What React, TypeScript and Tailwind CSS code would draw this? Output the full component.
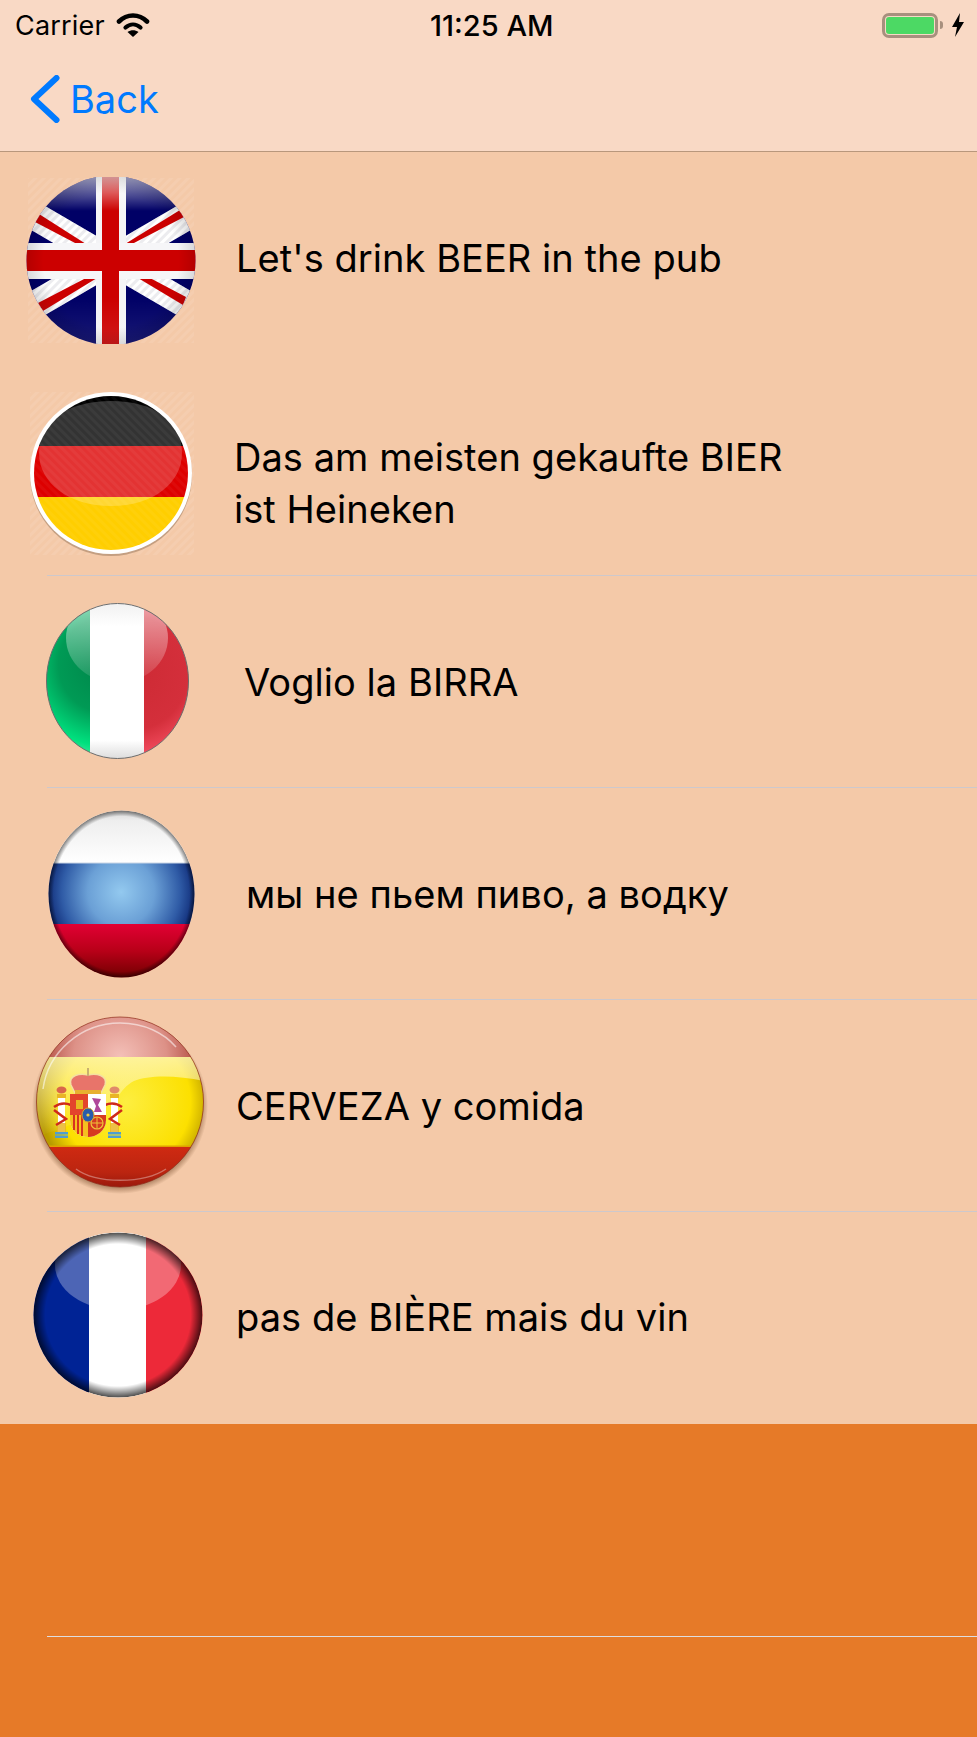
import type { ReactNode } from "react";

function Hatch({ id, w, h }: { id: string; w: number; h: number }) {
  return (
    <>
      <defs>
        <pattern id={id} width="6" height="6" patternUnits="userSpaceOnUse" patternTransform="rotate(45)">
          <rect width="3" height="6" fill="#ffffff" opacity="0.08" />
        </pattern>
      </defs>
      <rect x="2" y="1" width={w} height={h} fill={`url(#${id})`} />
    </>
  );
}

function UkFlag() {
  return (
    <svg width="170" height="167" viewBox="0 0 170 167" className="block">
      <defs>
        <clipPath id="uk-clip">
          <circle cx="85" cy="83.5" r="84.5" />
        </clipPath>
        <linearGradient id="uk-gloss" x1="0" y1="0" x2="0" y2="1">
          <stop offset="0" stopColor="#fff" stopOpacity="0.65" />
          <stop offset="1" stopColor="#fff" stopOpacity="0" />
        </linearGradient>
        <linearGradient id="uk-low" x1="0" y1="0" x2="0" y2="1">
          <stop offset="0" stopColor="#fff" stopOpacity="0" />
          <stop offset="1" stopColor="#fff" stopOpacity="0.1" />
        </linearGradient>
        <radialGradient id="uk-edge" cx="0.5" cy="0.5" r="0.5">
          <stop offset="0.8" stopColor="#000" stopOpacity="0" />
          <stop offset="1" stopColor="#000" stopOpacity="0.12" />
        </radialGradient>
        <pattern id="uk-stripe" width="6" height="6" patternUnits="userSpaceOnUse" patternTransform="rotate(45)">
          <rect width="3" height="6" fill="#c8c8d0" opacity="0.35" />
        </pattern>
      </defs>
      <Hatch id="uk-hatch" w={166} h={165} />
      <g clipPath="url(#uk-clip)">
        <rect width="170" height="167" fill="#000066" />
        <path d="M85 83.5 L-5 31 M85 83.5 L175 31 M85 83.5 L-5 136 M85 83.5 L175 136" stroke="#ffffff" strokeWidth="28" />
        <path d="M85 83.5 L-5 31 M85 83.5 L175 31 M85 83.5 L-5 136 M85 83.5 L175 136" stroke="url(#uk-stripe)" strokeWidth="28" />
        <polygon points="13,37 9,45 51,67 60,67" fill="#cc0000" />
        <polygon points="154,33 158,40 106,67 99,67" fill="#cc0000" />
        <polygon points="12,126 17,134 71,101 60,101" fill="#cc0000" />
        <polygon points="160,120 157,128 112,101 124,101" fill="#cc0000" />
        <rect x="70" y="0" width="30" height="167" fill="#f4f4f6" />
        <rect x="0" y="66" width="170" height="36" fill="#f6f6f8" />
        <rect x="76" y="0" width="17" height="167" fill="#cc0000" />
        <rect x="0" y="73" width="170" height="21" fill="#cc0000" />
        <rect width="170" height="34" fill="url(#uk-gloss)" />
        <rect y="120" width="170" height="47" fill="url(#uk-low)" />
        <circle cx="85" cy="83.5" r="84.5" fill="url(#uk-edge)" />
      </g>
    </svg>
  );
}

function GermanyFlag() {
  return (
    <svg width="166" height="166" viewBox="0 0 166 166" className="block">
      <defs>
        <clipPath id="de-clip">
          <circle cx="83" cy="82" r="77" />
        </clipPath>
        <pattern id="de-stripe" width="6" height="6" patternUnits="userSpaceOnUse" patternTransform="rotate(-45)">
          <rect width="3" height="6" fill="#ffffff" opacity="0.04" />
        </pattern>
      </defs>
      <Hatch id="de-hatch" w={164} h={163} />
      <circle cx="83" cy="84" r="81" fill="#8a6a50" opacity="0.45" />
      <circle cx="83" cy="82" r="81" fill="#ffffff" />
      <g clipPath="url(#de-clip)">
        <rect y="0" width="166" height="55" fill="#000000" />
        <rect y="55" width="166" height="51" fill="#dd0000" />
        <rect y="106" width="166" height="60" fill="#ffce00" />
        <path d="M11 62 C11 30 40 10 83 10 C126 10 154 30 154 62 C154 92 125 115 83 115 C41 115 11 92 11 62 Z" fill="#ffffff" opacity="0.2" />
        <rect width="166" height="166" fill="url(#de-stripe)" />
      </g>
    </svg>
  );
}

function ItalyFlag() {
  return (
    <svg width="143" height="156" viewBox="0 0 143 156" className="block">
      <defs>
        <clipPath id="it-clip">
          <ellipse cx="71.5" cy="78" rx="71" ry="77.5" />
        </clipPath>
        <radialGradient id="it-green" gradientUnits="userSpaceOnUse" cx="60" cy="62" r="95">
          <stop offset="0" stopColor="#00854a" />
          <stop offset="0.5" stopColor="#009a55" />
          <stop offset="0.85" stopColor="#00e07e" />
          <stop offset="1" stopColor="#45e89f" />
        </radialGradient>
        <radialGradient id="it-red" gradientUnits="userSpaceOnUse" cx="85" cy="70" r="95">
          <stop offset="0" stopColor="#cd2a34" />
          <stop offset="0.6" stopColor="#d42f3b" />
          <stop offset="0.85" stopColor="#f04a5c" />
          <stop offset="1" stopColor="#f07c8a" />
        </radialGradient>
        <linearGradient id="it-gloss" x1="0" y1="0" x2="0" y2="1">
          <stop offset="0" stopColor="#fff" stopOpacity="0.6" />
          <stop offset="1" stopColor="#fff" stopOpacity="0.08" />
        </linearGradient>
        <linearGradient id="it-white" x1="0" y1="0" x2="0" y2="1">
          <stop offset="0" stopColor="#f1f1f1" />
          <stop offset="0.15" stopColor="#ffffff" />
          <stop offset="0.88" stopColor="#ffffff" />
          <stop offset="1" stopColor="#dcdcdc" />
        </linearGradient>
      </defs>
      <g clipPath="url(#it-clip)">
        <rect width="44" height="156" fill="url(#it-green)" />
        <rect x="44" width="54" height="156" fill="url(#it-white)" />
        <rect x="98" width="45" height="156" fill="url(#it-red)" />
        <ellipse cx="71" cy="35" rx="51" ry="45" fill="url(#it-gloss)" />
        <rect x="44" width="54" height="156" fill="url(#it-white)" />
      </g>
      <ellipse cx="71.5" cy="78" rx="71" ry="77.5" fill="none" stroke="#6d6d6d" strokeWidth="1" />
    </svg>
  );
}

function RussiaFlag() {
  return (
    <svg width="147" height="168" viewBox="0 0 147 168" className="block">
      <defs>
        <clipPath id="ru-clip">
          <ellipse cx="73.5" cy="84" rx="73" ry="83.5" />
        </clipPath>
        <radialGradient id="ru-blue" gradientUnits="userSpaceOnUse" cx="73" cy="82" r="74">
          <stop offset="0" stopColor="#93c9ef" />
          <stop offset="0.45" stopColor="#6ba0d6" />
          <stop offset="0.8" stopColor="#2f5ba6" />
          <stop offset="1" stopColor="#102c78" />
        </radialGradient>
        <linearGradient id="ru-red" x1="0" y1="0" x2="0" y2="1">
          <stop offset="0" stopColor="#e20034" />
          <stop offset="0.5" stopColor="#b80018" />
          <stop offset="1" stopColor="#700000" />
        </linearGradient>
        <linearGradient id="ru-white" x1="0" y1="0" x2="0" y2="1">
          <stop offset="0" stopColor="#d4d4d4" />
          <stop offset="0.2" stopColor="#eeeeee" />
          <stop offset="1" stopColor="#ffffff" />
        </linearGradient>
        <radialGradient id="ru-edge" cx="0.5" cy="0.5" r="0.5">
          <stop offset="0.93" stopColor="#000" stopOpacity="0" />
          <stop offset="1" stopColor="#000" stopOpacity="0.5" />
        </radialGradient>
      </defs>
      <g clipPath="url(#ru-clip)">
        <rect width="147" height="53" fill="url(#ru-white)" />
        <rect y="53" width="147" height="61" fill="url(#ru-blue)" />
        <rect y="114" width="147" height="54" fill="url(#ru-red)" />
        <rect y="52.5" width="147" height="1" fill="#c9d6e6" />
        <ellipse cx="73.5" cy="84" rx="73" ry="83.5" fill="url(#ru-edge)" />
      </g>
    </svg>
  );
}

function SpainArms() {
  return (
    <g>
      {/* pillars */}
      <rect x="22" y="79" width="7" height="36" fill="#ffffff" />
      <rect x="75" y="79" width="7" height="36" fill="#ffffff" />
      <rect x="21" y="77" width="9" height="4" fill="#e9b526" />
      <rect x="74" y="77" width="9" height="4" fill="#e9b526" />
      <rect x="21" y="106" width="9" height="10" fill="#e9b526" opacity="0.85" />
      <rect x="74" y="106" width="9" height="10" fill="#e9b526" opacity="0.85" />
      <ellipse cx="25.5" cy="73" rx="5" ry="3.5" fill="#d9664a" />
      <ellipse cx="78.5" cy="73" rx="5" ry="3.5" fill="#e08a6a" />
      <rect x="19" y="115" width="13" height="2.5" fill="#4f9ed0" />
      <rect x="19" y="118.5" width="13" height="2.5" fill="#4f9ed0" />
      <rect x="72" y="115" width="13" height="2.5" fill="#4f9ed0" />
      <rect x="72" y="118.5" width="13" height="2.5" fill="#4f9ed0" />
      {/* ribbons */}
      <path d="M18 90 Q26 84 35 88 M18 93 L30 102 L20 108" stroke="#cf2a1a" strokeWidth="2.5" fill="none" />
      <path d="M86 90 Q78 84 69 88 M86 93 L74 102 L84 108" stroke="#cf2a1a" strokeWidth="2.5" fill="none" />
      {/* crown */}
      <path d="M35 68 C32 58 44 56 52 58 C60 56 72 58 69 68 L65 76 L39 76 Z" fill="#e8746a" stroke="#f4e0a0" strokeWidth="1.5" />
      <rect x="39" y="73" width="26" height="4" fill="#e8b030" />
      <rect x="51" y="51" width="2" height="8" fill="#c9b070" />
      {/* shield */}
      <path d="M34 77 H70 V103 C70 114 60 120 52 120 C44 120 34 114 34 103 Z" fill="#f5efe0" />
      <path d="M34 77 H52 V98 H34 Z" fill="#e3442c" />
      <rect x="40" y="83" width="7" height="9" fill="#e8b820" />
      <path d="M52 77 H70 V98 H52 Z" fill="#ffffff" />
      <path d="M56 81 L65 82 L62 88 L66 95 L58 95 L60 89 Z" fill="#b0479a" />
      <path d="M34 98 H52 V120 C44 120 34 114 34 103 Z" fill="#f5c020" />
      <path d="M38 98 V113 M42 98 V117 M46 98 V119" stroke="#d8331f" strokeWidth="2" />
      <path d="M52 98 H70 V103 C70 114 60 120 52 120 Z" fill="#d63a20" />
      <circle cx="61" cy="106" r="6" fill="none" stroke="#eec23a" strokeWidth="1.2" />
      <path d="M55 106 H67 M61 100 V112" stroke="#eec23a" strokeWidth="1" />
      <ellipse cx="52" cy="98" rx="6" ry="7" fill="#2a5cab" stroke="#d9a630" strokeWidth="1" />
      <circle cx="52" cy="98" r="1.6" fill="#f0cc40" />
    </g>
  );
}

function SpainFlag() {
  return (
    <svg width="176" height="180" viewBox="-4 -2 176 180" className="block">
      <defs>
        <clipPath id="es-clip">
          <ellipse cx="84" cy="85" rx="83.5" ry="85" />
        </clipPath>
        <radialGradient id="es-top" gradientUnits="userSpaceOnUse" cx="84" cy="40" r="85">
          <stop offset="0" stopColor="#f4c0b8" />
          <stop offset="0.55" stopColor="#dd9187" />
          <stop offset="1" stopColor="#a83c30" />
        </radialGradient>
        <radialGradient id="es-yellow" gradientUnits="userSpaceOnUse" cx="90" cy="85" r="86">
          <stop offset="0" stopColor="#fdee40" />
          <stop offset="0.75" stopColor="#fce000" />
          <stop offset="1" stopColor="#b89a00" />
        </radialGradient>
        <linearGradient id="es-red" x1="0" y1="0" x2="0" y2="1">
          <stop offset="0" stopColor="#cf2a12" />
          <stop offset="0.6" stopColor="#bb2510" />
          <stop offset="1" stopColor="#96180c" />
        </linearGradient>
        <radialGradient id="es-shadow" cx="0.5" cy="0.5" r="0.5">
          <stop offset="0.9" stopColor="#5a3010" stopOpacity="0.55" />
          <stop offset="1" stopColor="#5a3010" stopOpacity="0" />
        </radialGradient>
        <linearGradient id="es-sheen" gradientUnits="userSpaceOnUse" x1="0" y1="40" x2="0" y2="120">
          <stop offset="0" stopColor="#fff8c8" stopOpacity="0.75" />
          <stop offset="1" stopColor="#fff8c8" stopOpacity="0" />
        </linearGradient>
      </defs>
      <ellipse cx="84" cy="89" rx="88" ry="88" fill="url(#es-shadow)" />
      <g clipPath="url(#es-clip)">
        <rect width="168" height="40" fill="url(#es-top)" />
        <rect y="40" width="168" height="90" fill="url(#es-yellow)" />
        <path d="M0 40 H168 V64 C140 58 112 58 98 64 C90 68 86 74 80 82 C60 100 30 110 0 120 Z" fill="url(#es-sheen)" />
        <rect y="130" width="168" height="42" fill="url(#es-red)" />
        <rect y="128.5" width="168" height="1.5" fill="#e0a000" />
        <SpainArms />
        <path d="M7 72 C12 35 45 6 84 6 C108 6 128 16 140 30" stroke="#ffffff" strokeOpacity="0.55" strokeWidth="1.5" fill="none" />
        <path d="M40 152 C60 167 108 167 130 152" stroke="#ffffff" strokeOpacity="0.35" strokeWidth="1.5" fill="none" />
      </g>
      <ellipse cx="84" cy="85" rx="83.5" ry="85" fill="none" stroke="#8e2a18" strokeWidth="1" strokeOpacity="0.7" />
    </svg>
  );
}

function FranceFlag() {
  return (
    <svg width="170" height="166" viewBox="0 0 170 166" className="block">
      <defs>
        <clipPath id="fr-clip">
          <ellipse cx="85" cy="83" rx="84.5" ry="82.5" />
        </clipPath>
        <radialGradient id="fr-edge" cx="0.5" cy="0.5" r="0.5">
          <stop offset="0.86" stopColor="#000" stopOpacity="0" />
          <stop offset="1" stopColor="#000" stopOpacity="0.7" />
        </radialGradient>
      </defs>
      <g clipPath="url(#fr-clip)">
        <rect width="56" height="166" fill="#002395" />
        <rect x="56" width="57" height="166" fill="#ffffff" />
        <rect x="113" width="57" height="166" fill="#ed2939" />
        <ellipse cx="85" cy="33" rx="63" ry="45" fill="#ffffff" opacity="0.3" />
        <rect x="56" width="57" height="90" fill="#ffffff" />
        <ellipse cx="85" cy="83" rx="84.5" ry="82.5" fill="url(#fr-edge)" />
      </g>
    </svg>
  );
}

type Row = { flag: ReactNode; text: ReactNode; flagClass: string; textClass: string; border: boolean };

const rows: Row[] = [
  { flag: <UkFlag />, text: "Let's drink BEER in the pub", flagClass: "ml-[26px] mt-[25px] w-[170px]", textClass: "ml-[40px]", border: false },
  { flag: <GermanyFlag />, text: <>Das am meisten gekaufte BIER<br />ist Heineken</>, flagClass: "ml-[28px] mt-[27px] w-[166px]", textClass: "ml-[40px] mt-[26px]", border: true },
  { flag: <ItalyFlag />, text: "Voglio la BIRRA", flagClass: "ml-[46px] mt-[27px] w-[143px]", textClass: "ml-[55px]", border: true },
  { flag: <RussiaFlag />, text: "мы не пьем пиво, а водку", flagClass: "ml-[48px] mt-[22px] w-[147px]", textClass: "ml-[51px]", border: true },
  { flag: <SpainFlag />, text: "CERVEZA y comida", flagClass: "ml-[32px] mt-[15px] w-[176px]", textClass: "ml-[28px]", border: true },
  { flag: <FranceFlag />, text: "pas de BIÈRE mais du vin", flagClass: "ml-[33px] mt-[20px] w-[170px]", textClass: "ml-[33px] -mt-[2px]", border: false },
];

export default function App() {
  return (
    <div className="flex h-[1737px] w-[977px] flex-col overflow-hidden bg-[#e67a28] font-['Inter',sans-serif] text-black">
      {/* Status + nav bar */}
      <header className="h-[152px] shrink-0 border-b border-[#b8977c] bg-[#f9d9c5]">
        <div className="relative flex h-[50px] items-center justify-between pl-[15px] pr-[12px]">
          <div className="flex items-center gap-[11px]">
            <span className="text-[27px] leading-none tracking-[0.2px]">Carrier</span>
            <svg width="34" height="24" viewBox="0 0 34 24">
              <path d="M3 8.5 C11 0.5 23 0.5 31 8.5" fill="none" stroke="#000" strokeWidth="4.6" strokeLinecap="round" />
              <path d="M9.5 14.5 C14 10.5 20 10.5 24.5 14.5" fill="none" stroke="#000" strokeWidth="4.2" strokeLinecap="round" />
              <path d="M11.5 19 C15 16.8 19 16.8 22.5 19 L17 24 Z" fill="#000" />
            </svg>
          </div>
          <span className="absolute left-[430px] text-[29px] font-medium leading-none">11:25 AM</span>
          <div className="flex items-center gap-[8px]">
            <div className="flex items-center gap-[2px]">
              <div className="flex h-[25px] w-[56px] items-center rounded-[7px] border-[3px] border-[#a8907e] p-[1px]">
                <div className="h-full w-full rounded-[3px] bg-[#4cd964]" />
              </div>
              <div className="h-[8px] w-[3px] rounded-r bg-[#a8907e]" />
            </div>
            <svg width="14" height="24" viewBox="0 0 14 24">
              <polygon points="9,0 1,14 6,14 4,24 13,9 8,9" fill="#000" />
            </svg>
          </div>
        </div>
        <div className="flex h-[101px] items-start pl-[30px] pt-[25px]">
          <svg width="30" height="48" viewBox="0 0 30 48">
            <path d="M26.5 3 L4 24 L26.5 45" fill="none" stroke="#007aff" strokeWidth="6" strokeLinecap="round" strokeLinejoin="round" />
          </svg>
          <span className="ml-[10px] mt-[1px] text-[38px] leading-[46px] text-[#007aff]">Back</span>
        </div>
      </header>

      {/* Table rows */}
      <div className="bg-[#f4c9a8]">
        {rows.map((row, i) => (
          <div key={i} className="relative flex h-[212px] items-start">
            <div className={`shrink-0 ${row.flagClass}`}>{row.flag}</div>
            <div className={`self-center text-[38px] leading-[52px] tracking-[0.05px] ${row.textClass}`}>{row.text}</div>
            {row.border && <div className="absolute bottom-0 left-[47px] right-0 h-px bg-[#cdc8cc]" />}
          </div>
        ))}
      </div>

      {/* Empty orange area */}
      <div className="flex-1 pt-[212px]">
        <div className="ml-[47px] h-[1px] bg-[#dedde0]" />
      </div>
    </div>
  );
}
